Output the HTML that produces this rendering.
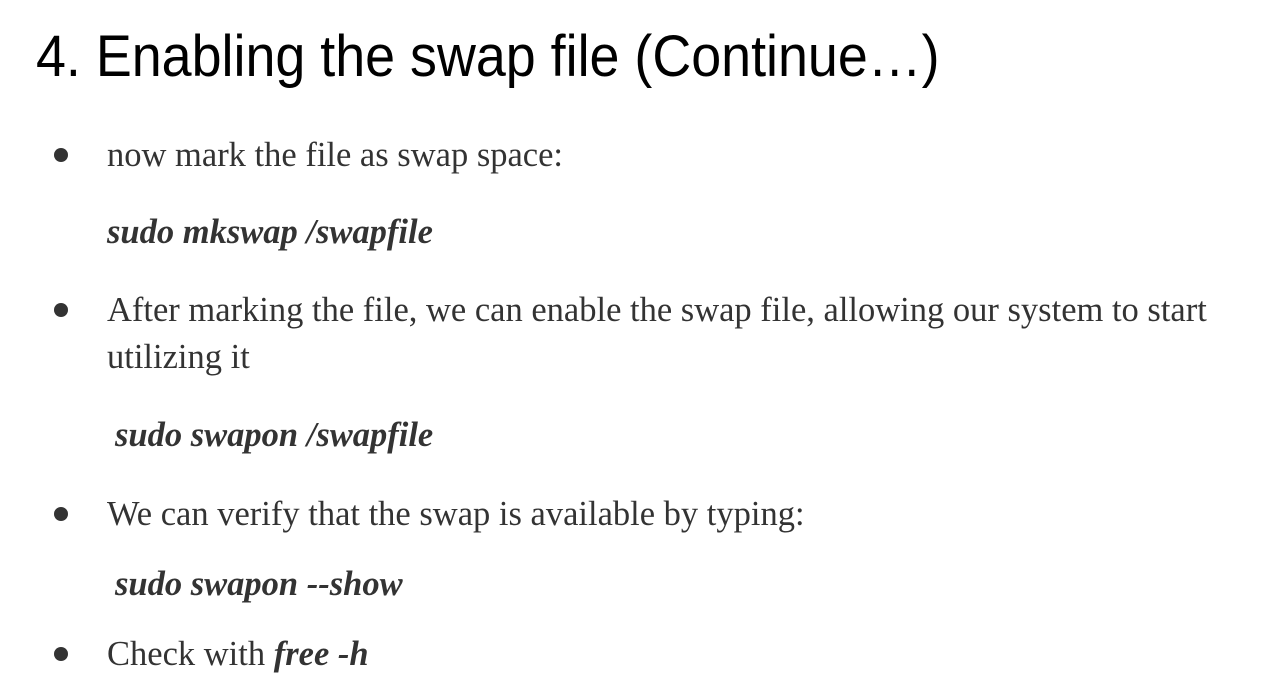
<!DOCTYPE html>
<html><head><meta charset="utf-8"><style>
html,body{margin:0;padding:0;background:#fff;width:1270px;height:679px;overflow:hidden;position:relative}
.t{position:absolute;left:36px;top:28px;font-family:"Liberation Sans",sans-serif;font-size:58px;color:#000;white-space:nowrap;line-height:1;transform:scaleX(0.928);transform-origin:0 0}
.l{position:absolute;font-family:"Liberation Serif",serif;font-size:34.5px;color:#333;white-space:nowrap;line-height:1}
.b{font-weight:bold;font-style:italic}
.d{position:absolute;left:54px;width:14px;height:14px;border-radius:50%;background:#333}
</style></head><body>
<div class="t">4. Enabling the swap file (Continue…)</div>
<div class="d" style="top:148px"></div>
<div class="l" style="left:107px;top:138px">now mark the file as swap space:</div>
<div class="l b" style="left:107px;top:215px">sudo mkswap /swapfile</div>
<div class="d" style="top:303px"></div>
<div class="l" style="left:107px;top:293px">After marking the file, we can enable the swap file, allowing our system to start</div>
<div class="l" style="left:107px;top:340px">utilizing it</div>
<div class="l b" style="left:115px;top:418px">sudo swapon /swapfile</div>
<div class="d" style="top:507px"></div>
<div class="l" style="left:107px;top:497px">We can verify that the swap is available by typing:</div>
<div class="l b" style="left:115px;top:567px">sudo swapon --show</div>
<div class="d" style="top:647px"></div>
<div class="l" style="left:107px;top:637px">Check with <span class="b">free -h</span></div>
</body></html>
